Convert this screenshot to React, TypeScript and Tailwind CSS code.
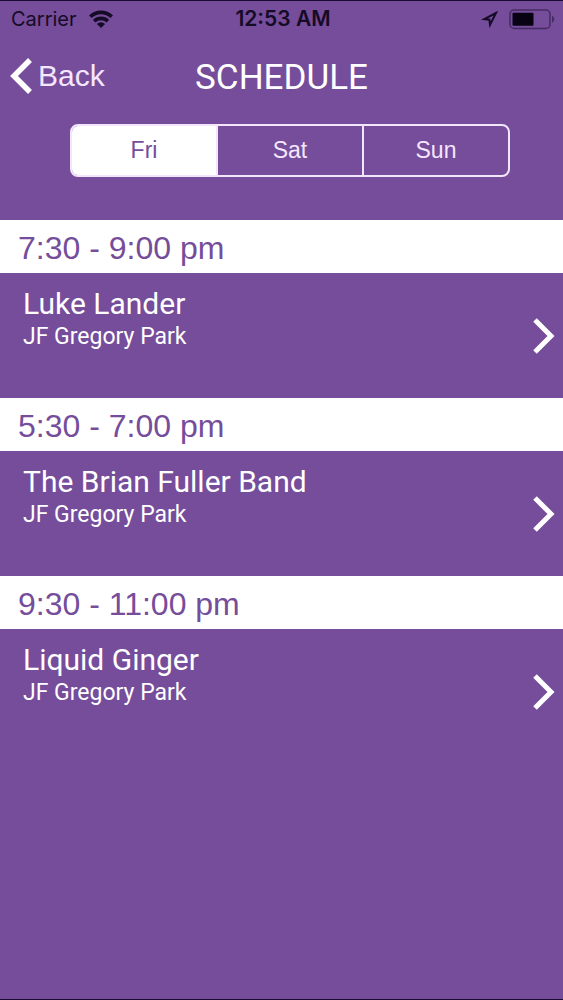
import { useState } from "react";

type Day = "Fri" | "Sat" | "Sun";

interface Slot {
  time: string;
  artist: string;
  venue: string;
}

const days: Day[] = ["Fri", "Sat", "Sun"];

const slots: Slot[] = [
  { time: "7:30 - 9:00 pm", artist: "Luke Lander", venue: "JF Gregory Park" },
  { time: "5:30 - 7:00 pm", artist: "The Brian Fuller Band", venue: "JF Gregory Park" },
  { time: "9:30 - 11:00 pm", artist: "Liquid Ginger", venue: "JF Gregory Park" },
];

function StatusBar() {
  return (
    <div className="grid grid-cols-3 items-center h-9 pl-[11px] pr-2 font-['Inter',sans-serif] text-[21px] leading-6 text-[#150b26]">
      <div className="flex items-center gap-3">
        <span className="text-[20px]">Carrier</span>
        <svg width="24" height="18" viewBox="0 0 24 18" fill="none" stroke="currentColor" strokeWidth="3.6">
          <path d="M1.3 6.8a15.2 15.2 0 0 1 21.4 0" />
          <path d="M5.2 11.2a9.7 9.7 0 0 1 13.6 0" />
          <path d="M12 18 7.9 13.9a5.9 5.9 0 0 1 8.2 0z" fill="currentColor" stroke="none" />
        </svg>
      </div>
      <span className="text-center font-semibold whitespace-nowrap">12:53 AM</span>
      <div className="flex items-center justify-end gap-[11px]">
        <svg width="17" height="17" viewBox="0 0 17 17" fill="none" stroke="currentColor" strokeWidth="2">
          <path d="M15 2 3.2 8.1l5.2.6.6 5.1z" />
        </svg>
        <svg width="46" height="21" viewBox="0 0 46 21" fill="none">
          <rect x="1" y="1" width="40" height="18.5" rx="4" stroke="#462b62" strokeWidth="1.5" />
          <rect x="3.5" y="3.8" width="21" height="13" rx="1" fill="#080312" />
          <path d="M43 6.8c3 1.5 3 5.5 0 7z" fill="#462b62" />
        </svg>
      </div>
    </div>
  );
}

export default function App() {
  const [day, setDay] = useState<Day>("Fri");

  return (
    <div className="min-h-screen bg-[#754d9b] border-y border-[#1a0b35] text-white font-['Roboto',sans-serif]">
      <StatusBar />

      {/* Navigation bar */}
      <header className="grid grid-cols-[1fr_auto_1fr] items-center h-[82px] px-[10px]">
        <a href="#" className="flex items-center gap-[6px] pb-1 font-['Liberation_Sans',sans-serif] text-[30px] leading-9 text-[#f5e6ff]">
          <svg width="22" height="36" viewBox="0 0 22 36" fill="none" stroke="#fff" strokeWidth="5.5">
            <path d="M20 2 4 18l16 16" />
          </svg>
          Back
        </a>
        <h1 className="text-[35px] leading-10">SCHEDULE</h1>
      </header>

      {/* Day picker */}
      <div className="pl-[70px] pr-[53px] pt-[5px] pb-[43px]">
        <div className="flex h-[53px] rounded-lg border-2 border-[#f3e6fb] divide-x-2 divide-[#f3e6fb] overflow-hidden font-['Liberation_Sans',sans-serif] text-[23px]">
          {days.map((d) => (
            <button
              key={d}
              type="button"
              aria-pressed={d === day}
              onClick={() => setDay(d)}
              className={d === day ? "flex-1 bg-white text-[#754d9b]" : "flex-1 text-[#f5e6ff]"}
            >
              {d}
            </button>
          ))}
        </div>
      </div>

      {/* Time slots */}
      <main>
        {slots.map((slot) => (
          <section key={slot.time}>
            <h2 className="h-[53px] bg-white pl-[18px] font-['Liberation_Sans',sans-serif] text-[32px] leading-[56px] text-[#754d9b]">
              {slot.time}
            </h2>
            <a href="#" className="flex items-center justify-between h-[125px] pl-[23px] pr-[7px]">
              <div className="self-start pt-3">
                <p className="text-[30px] leading-[38px]">{slot.artist}</p>
                <p className="text-[23px] leading-7">{slot.venue}</p>
              </div>
              <svg width="24" height="38" viewBox="0 0 24 38" fill="none" stroke="currentColor" strokeWidth="5">
                <path d="M3 3l16 16L3 35" />
              </svg>
            </a>
          </section>
        ))}
      </main>
    </div>
  );
}
